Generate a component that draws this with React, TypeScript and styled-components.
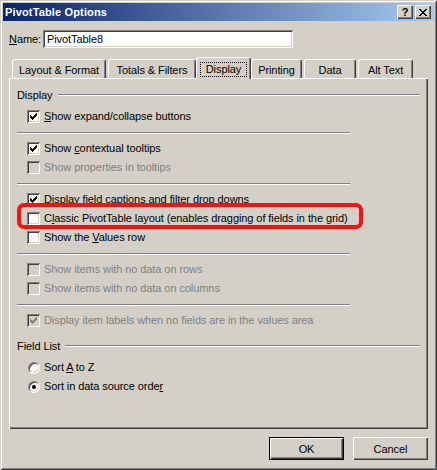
import React from 'react';
import styled, { createGlobalStyle } from 'styled-components';

const FACE = '#d4d0c8';

const Global = createGlobalStyle`
  html, body { margin: 0; padding: 0; background: ${FACE}; }
  body { font-family: "Liberation Sans", Arial, sans-serif; font-size: 11px; color: #000; letter-spacing: -0.08px; }
  * { box-sizing: border-box; }
`;

const Window = styled.div`
  width: 437px;
  height: 470px;
  background: ${FACE};
  padding: 3px;
  display: flex;
  flex-direction: column;
  box-shadow: inset 1px 1px ${FACE}, inset -1px -1px #404040, inset 2px 2px #fff, inset -2px -2px #808080;
`;

const TitleBar = styled.div`
  height: 18px;
  display: flex;
  align-items: center;
  padding: 0 3px 0 2px;
  background: linear-gradient(to right, #0a246a, #a6caf0);
  color: #fff;
  font-weight: bold;
  font-size: 11px;
`;

const Title = styled.span`
  flex: 1;
  letter-spacing: 0.15px;
`;

const CaptionButton = styled.span`
  width: 16px;
  height: 14px;
  margin-left: 2px;
  background: ${FACE};
  color: #000;
  display: flex;
  align-items: center;
  justify-content: center;
  font-weight: bold;
  font-size: 11px;
  box-shadow: inset 1px 1px #fff, inset -1px -1px #404040, inset -2px -2px #808080;
`;

const Body = styled.div`
  flex: 1;
  padding: 0 6px;
  display: flex;
  flex-direction: column;
`;

const NameRow = styled.div`
  margin-top: 9px;
  height: 18px;
  display: flex;
  align-items: center;
`;

const NameLabel = styled.span`
  width: 34px;
`;

const NameInput = styled.div`
  width: 250px;
  height: 18px;
  background: #fff;
  padding: 0 4px;
  display: flex;
  align-items: center;
  box-shadow: inset 1px 1px #808080, inset -1px -1px #fff, inset 2px 2px #404040, inset -2px -2px ${FACE};
`;

const TabStrip = styled.div`
  margin-top: 9px;
  height: 21px;
  padding-left: 3px;
  display: flex;
  align-items: flex-end;
  gap: 2px;
`;

const Tab = styled.div<{ $w: number; $active?: boolean }>`
  position: relative;
  z-index: ${p => (p.$active ? 1 : 0)};
  width: ${p => p.$w}px;
  height: ${p => (p.$active ? 22 : 19)}px;
  margin: ${p => (p.$active ? '0 -2px -1px -2px' : '0')};
  padding-top: 2px;
  display: flex;
  align-items: center;
  justify-content: center;
  background: ${FACE};
  border-top: 1px solid #fff;
  border-left: 1px solid #fff;
  border-right: 1px solid #404040;
  border-radius: 3px 3px 0 0;
  box-shadow: inset -1px 0 #808080;
  white-space: nowrap;
`;

const FocusLabel = styled.span`
  border: 1px dotted #000;
  padding: 0 5px;
  line-height: 13px;
`;

const Panel = styled.div`
  height: 351px;
  padding: 10px 8px 0 8px;
  display: flex;
  flex-direction: column;
  box-shadow: inset 1px 1px #fff, inset -1px -1px #404040, inset -2px -2px #808080;
`;

const SectionHeader = styled.div<{ $top?: number }>`
  height: 14px;
  margin-top: ${p => p.$top ?? 0}px;
  margin-bottom: 5px;
  display: flex;
  align-items: center;
  gap: 5px;
`;

const EtchedLine = styled.span`
  flex: 1;
  height: 2px;
  border-top: 1px solid #808080;
  border-bottom: 1px solid #fff;
`;

const Separator = styled.div`
  width: 333px;
  height: 2px;
  margin: 6px 0 5px;
  border-top: 1px solid #808080;
  border-bottom: 1px solid #fff;
`;

const Row = styled.div<{ $disabled?: boolean }>`
  position: relative;
  height: 19px;
  padding-left: 10px;
  display: flex;
  align-items: center;
  color: ${p => (p.$disabled ? '#808080' : '#000')};
  white-space: nowrap;
`;

const Label = styled.span`
  margin-left: 4px;
  padding-bottom: 2px;
`;

const Box = styled.span<{ $disabled?: boolean }>`
  width: 13px;
  height: 13px;
  flex: none;
  display: flex;
  align-items: center;
  justify-content: center;
  background: ${p => (p.$disabled ? FACE : '#fff')};
  box-shadow: inset 1px 1px #808080, inset -1px -1px #fff, inset 2px 2px #404040, inset -2px -2px ${FACE};
`;

const RadioCircle = styled.span`
  width: 12px;
  height: 12px;
  margin-left: 1px;
  flex: none;
  border-radius: 50%;
  border: 1px solid;
  border-color: #808080 #fff #fff #808080;
  box-shadow: inset 1px 1px #404040, inset -1px -1px ${FACE};
  background: #fff;
  display: flex;
  align-items: center;
  justify-content: center;
`;

const RadioDot = styled.span`
  width: 4px;
  height: 4px;
  border-radius: 50%;
  background: #000;
`;

const Highlight = styled.span`
  position: absolute;
  left: 0;
  top: -6px;
  width: 346px;
  height: 26px;
  border: 4px solid #ee1515;
  border-radius: 7px;
  pointer-events: none;
`;

const ButtonRow = styled.div`
  margin-top: 8px;
  display: flex;
  justify-content: flex-end;
  gap: 9px;
`;

const Button = styled.div<{ $default?: boolean }>`
  width: 75px;
  height: 23px;
  display: flex;
  align-items: center;
  justify-content: center;
  background: ${FACE};
  border: ${p => (p.$default ? '1px solid #000' : 'none')};
  box-shadow: inset 1px 1px #fff, inset -1px -1px #404040, inset -2px -2px #808080;
`;

const U = styled.span`
  text-decoration: underline;
`;

const CHECK = [
  '......#',
  '.....##',
  '#...###',
  '##.###.',
  '#####..',
  '.###...',
  '..#....',
];

const CheckMark = ({ color }: { color: string }) => (
  <svg width="7" height="7" viewBox="0 0 7 7" shapeRendering="crispEdges">
    {CHECK.flatMap((row, y) =>
      row.split('').map((c, x) =>
        c === '#' ? <rect key={`${x}-${y}`} x={x} y={y} width="1" height="1" fill={color} /> : null
      )
    )}
  </svg>
);

const CloseGlyph = () => (
  <svg width="8" height="7" viewBox="0 0 8 7" shapeRendering="crispEdges">
    <path d="M0 0h2v1h-2zM6 0h2v1h-2zM1 1h2v1h-2zM5 1h2v1h-2zM2 2h4v1h-4zM3 3h2v1h-2zM2 4h4v1h-4zM1 5h2v1h-2zM5 5h2v1h-2zM0 6h2v1h-2zM6 6h2v1h-2z" fill="#000" />
  </svg>
);

type CheckProps = {
  checked?: boolean;
  disabled?: boolean;
  highlight?: boolean;
  children: React.ReactNode;
};

const Check = ({ checked, disabled, highlight, children }: CheckProps) => (
  <Row $disabled={disabled}>
    <Box $disabled={disabled}>{checked && <CheckMark color={disabled ? '#808080' : '#000'} />}</Box>
    <Label>{children}</Label>
    {highlight && <Highlight />}
  </Row>
);

const Radio = ({ checked, children }: { checked?: boolean; children: React.ReactNode }) => (
  <Row>
    <RadioCircle>{checked && <RadioDot />}</RadioCircle>
    <Label>{children}</Label>
  </Row>
);

const tabs = [
  { label: 'Layout & Format', w: 94 },
  { label: 'Totals & Filters', w: 88 },
  { label: 'Display', w: 55, active: true },
  { label: 'Printing', w: 51 },
  { label: 'Data', w: 52 },
  { label: 'Alt Text', w: 55 },
];

export default function App() {
  return (
    <>
      <Global />
      <Window>
        <TitleBar>
          <Title>PivotTable Options</Title>
          <CaptionButton>?</CaptionButton>
          <CaptionButton>
            <CloseGlyph />
          </CaptionButton>
        </TitleBar>
        <Body>
          <NameRow>
            <NameLabel>
              <U>N</U>ame:
            </NameLabel>
            <NameInput>PivotTable8</NameInput>
          </NameRow>
          <TabStrip>
            {tabs.map(t => (
              <Tab key={t.label} $w={t.w} $active={t.active}>
                {t.active ? <FocusLabel>{t.label}</FocusLabel> : t.label}
              </Tab>
            ))}
          </TabStrip>
          <Panel>
            <SectionHeader>
              <span>Display</span>
              <EtchedLine />
            </SectionHeader>
            <Check checked>
              <U>S</U>how expand/collapse buttons
            </Check>
            <Separator />
            <Check checked>
              Show <U>c</U>ontextual tooltips
            </Check>
            <Check disabled>Show properties in tooltips</Check>
            <Separator />
            <Check checked>Display field captions and filter drop downs</Check>
            <Check highlight>
              C<U>l</U>assic PivotTable layout (enables dragging of fields in the grid)
            </Check>
            <Check>
              Show the <U>V</U>alues row
            </Check>
            <Separator />
            <Check disabled>Show items with no data on rows</Check>
            <Check disabled>Show items with no data on columns</Check>
            <Separator />
            <Check checked disabled>
              Display item labels when no fields are in the values area
            </Check>
            <SectionHeader $top={9}>
              <span>Field List</span>
              <EtchedLine />
            </SectionHeader>
            <Radio>
              Sort <U>A</U> to Z
            </Radio>
            <Radio checked>
              Sort in data source orde<U>r</U>
            </Radio>
          </Panel>
          <ButtonRow>
            <Button $default>OK</Button>
            <Button>Cancel</Button>
          </ButtonRow>
        </Body>
      </Window>
    </>
  );
}
